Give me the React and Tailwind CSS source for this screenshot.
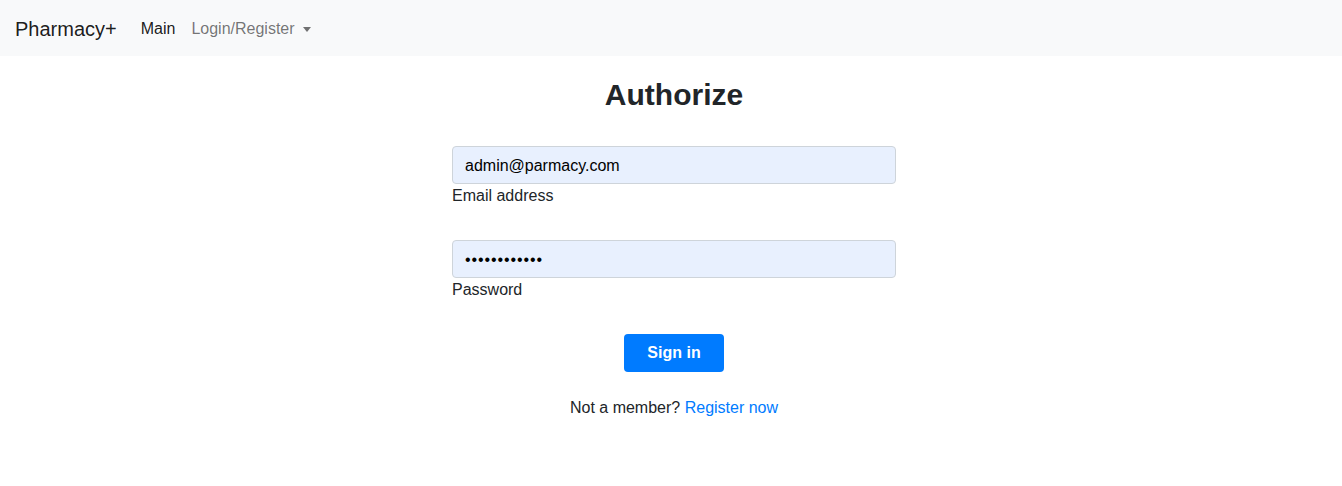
import React from "react";

export default function App() {
  return (
    <div className="min-h-screen bg-white text-[#212529] font-['Liberation_Sans',Arial,sans-serif]">
      {/* Navbar */}
      <nav className="h-14 bg-[#f8f9fa] flex items-center pl-[15px] pr-4">
        <span className="text-[20px] text-black/90 mr-[16px] pt-[2px]">Pharmacy+</span>
        <a className="text-base text-black/90 px-2 pt-[2px] cursor-pointer">Main</a>
        <a className="text-base text-black/55 px-2 pt-[2px] flex items-center gap-[8px] cursor-pointer">
          Login/Register
          <span className="inline-block w-0 h-0 border-l-[4px] border-r-[4px] border-t-[5px] border-l-transparent border-r-transparent border-t-black/55" />
        </a>
      </nav>

      {/* Form */}
      <div className="flex justify-center pl-[6px]">
        <div className="w-[444px] flex flex-col">
          <h2 className="mt-5 text-[30px] leading-[38px] font-bold text-center">Authorize</h2>

          <input
            type="email"
            defaultValue="admin@parmacy.com"
            className="mt-8 h-[38px] w-full px-3 pt-[2px] rounded border border-[#ced4da] bg-[#e8f0fe] text-base text-black outline-none"
          />
          <label className="text-base leading-6">Email address</label>

          <input
            type="password"
            defaultValue="adminpasswrd"
            className="mt-8 h-[38px] w-full px-3 pt-[2px] rounded border border-[#ced4da] bg-[#e8f0fe] text-base text-black tracking-[0.9px] outline-none"
          />
          <label className="text-base leading-6">Password</label>

          <div className="mt-8 flex justify-center">
            <button className="w-[100px] h-[38px] rounded bg-[#007bff] text-white font-bold text-base">
              Sign in
            </button>
          </div>

          <p className="mt-6 text-center text-base leading-6">
            Not a member? <a className="text-[#007bff] cursor-pointer">Register now</a>
          </p>
        </div>
      </div>
    </div>
  );
}
